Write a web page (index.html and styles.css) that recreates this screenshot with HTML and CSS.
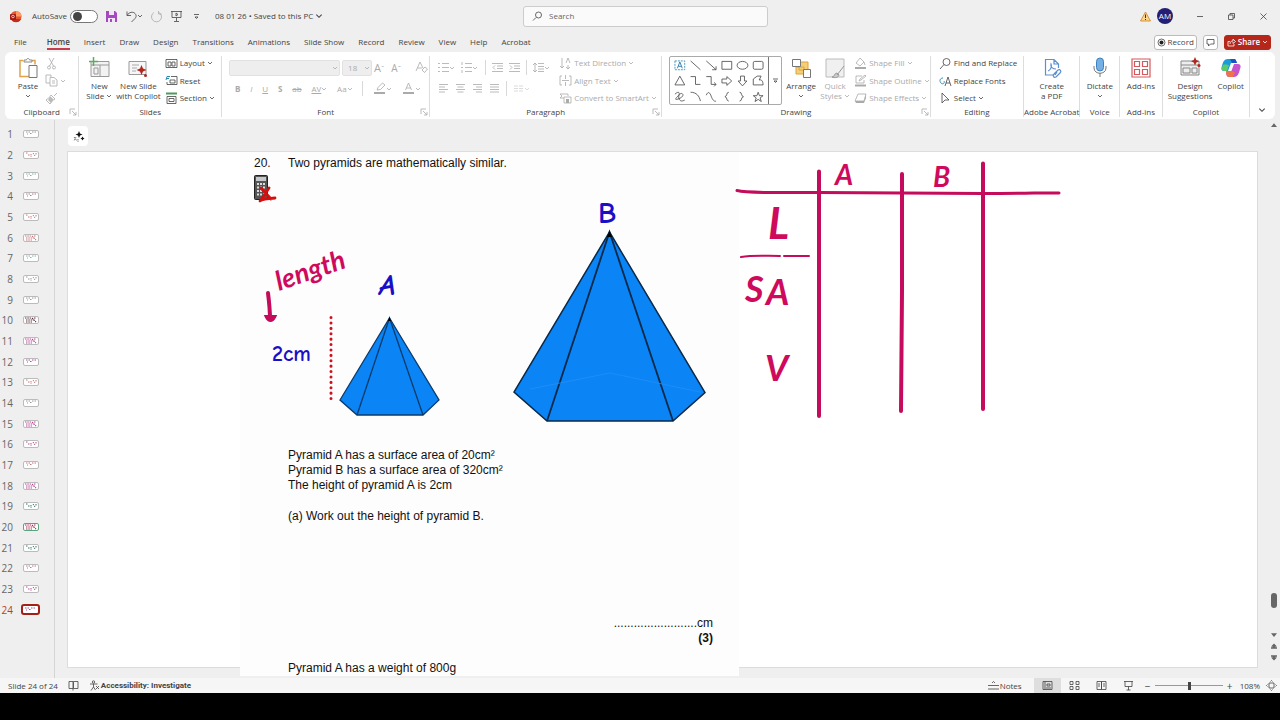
FILE: index.html
```html
<!DOCTYPE html>
<html lang="en">
<head>
<meta charset="utf-8">
<title>08 01 26 - PowerPoint</title>
<link rel="stylesheet" href="styles.css">
</head>
<body>
<svg class="defs" aria-hidden="true">
  <symbol id="chev" viewBox="0 0 6 6"><path d="M1 2l2 2 2-2" fill="none" stroke="currentColor" stroke-width=".8"/></symbol>
  <symbol id="launch" viewBox="0 0 8 8"><path d="M1 6V1h5M3 3l4 4M7 4v3H4" fill="none" stroke="currentColor" stroke-width=".8"/></symbol>
  <symbol id="d1" viewBox="0 0 15 8"><path d="M2 2h4M8 2h4M3 4h1M6 3.500h2" stroke="currentColor" stroke-dasharray="1.500 1" fill="none"/></symbol>
  <symbol id="d2" viewBox="0 0 15 8"><path d="M2 2h2M4 4h2M7 3v3M9 2l2 3M12 2v2" stroke="currentColor" stroke-dasharray="1.500 .8" fill="none"/></symbol>
  <symbol id="d3" viewBox="0 0 15 8"><path d="M1 2h6M2 4h8M2 6h6M8 2l4 4M10 2h2" stroke="currentColor" stroke-width="1.200" stroke-dasharray="1.500 .8" fill="none"/></symbol>
</svg>

<header class="titlebar">
  <div class="quick">
    <svg class="i13" viewBox="0 0 13 13"><circle cx="7" cy="6.500" r="5.500" fill="#e8552e"/><path d="M7 1a5.500 5.500 0 0 1 5.500 5.500H7z" fill="#ff9a62"/><path d="M2 9a5.500 5.500 0 0 0 10 0z" fill="#c12c20"/><rect x="1" y="4" width="6" height="6" rx="1" fill="#a31912"/><circle cx="4" cy="6.500" r="1.300" fill="none" stroke="#fff" stroke-width=".7"/></svg>
    <label class="autosave">AutoSave <input type="checkbox" class="toggle"></label>
    <button aria-label="Save"><svg class="i13" viewBox="0 0 13 13"><path d="M1 1h9l2 2v9H1z" fill="#a648c0"/><path d="M4 1h5v4H4zM3 8h7v4H3z" fill="#f3e5f7"/><path d="M5 9h2v3H5z" fill="#a648c0"/></svg></button>
    <button aria-label="Undo"><svg class="i13" viewBox="0 0 13 13"><path d="M2 1.500v4h4M2.200 5.300C4 2 8 1.300 10 3.500s1 4-.5 5.500L6.500 12" class="ln"/></svg><svg class="ch"><use href="#chev"/></svg></button>
    <button aria-label="Redo" class="off"><svg class="i13" viewBox="0 0 13 13"><path d="M4 2.500A5 5 0 1 0 9 2.500M8.500 1v3h3" class="ln"/></svg></button>
    <button aria-label="Start slide show"><svg class="i13" viewBox="0 0 13 13"><path d="M1 1.500h11M2 1.500v6h9v-6M6.500 8v3M4 11.500h5M6 3l2 1.500L6 6z" class="ln"/></svg></button>
    <button aria-label="Customize"><svg class="i13" viewBox="0 0 13 13"><path d="M4 4.500h5M5 7l1.500 1.500L8 7z" class="ln"/></svg></button>
    <button class="doc">08 01 26 • Saved to this PC <svg class="ch8"><use href="#chev"/></svg></button>
  </div>
  <label class="search"><svg class="i13" viewBox="0 0 13 13"><circle cx="7.500" cy="5" r="3" class="ln"/><path d="M5 7.500L2 10.500" class="ln"/></svg><input type="search" placeholder="Search" aria-label="Search"></label>
  <div class="win">
    <svg class="i11" viewBox="0 0 11 11"><path d="M5.500 1l5 9H.5z" fill="#fbd58a" stroke="#c98229" stroke-width=".8"/><path d="M5.500 3.500v3.500M5.500 8v1" stroke="#333"/></svg>
    <button class="avatar">AM</button>
    <button aria-label="Minimize"><svg class="i11" viewBox="0 0 11 11"><path d="M3 5.500h6" class="ln"/></svg></button>
    <button aria-label="Restore"><svg class="i11" viewBox="0 0 11 11"><path d="M2.500 4h4.500v4.500H2.500zM4 4V2.500h4.500v4.500H7" class="ln"/></svg></button>
    <button aria-label="Close"><svg class="i11" viewBox="0 0 11 11"><path d="M2.500 2.500l6 6M8.500 2.500l-6 6" class="ln"/></svg></button>
  </div>
</header>

<nav class="tabs">
  <a href="#">File</a><a href="#" class="on">Home</a><a href="#">Insert</a><a href="#">Draw</a><a href="#">Design</a><a href="#">Transitions</a><a href="#">Animations</a><a href="#">Slide Show</a><a href="#">Record</a><a href="#">Review</a><a href="#">View</a><a href="#">Help</a><a href="#">Acrobat</a>
  <div class="tabtools">
    <button class="box"><svg class="i9" viewBox="0 0 9 9"><circle cx="4.500" cy="4.500" r="3.500" class="ln"/><circle cx="4.500" cy="4.500" r="2" fill="#222"/></svg>Record</button>
    <button class="box" aria-label="Comments"><svg class="i9" viewBox="0 0 9 9"><path d="M1 1.500h7v4.500H4.500L2.500 8V6H1z" class="ln"/></svg></button>
    <button class="box share"><svg class="i9" viewBox="0 0 9 9"><path d="M3 3.500H1v4.500h6V6M3 6c0-2 1-3 3-3V1l2.500 2.500L6 5.500V4" class="ln"/></svg>Share<svg class="ch"><use href="#chev"/></svg></button>
  </div>
</nav>

<div class="ribbon-wrap">
<section class="ribbon" aria-label="Home ribbon">
  <div class="group g-clip">
    <div class="body">
      <button class="big"><svg class="i22" viewBox="0 0 22 22"><path d="M6 3.500H3v16h9M15 3.500h3v4" fill="none" stroke="#e0a24a" stroke-width="1.500"/><path d="M7 5V3h2.500c0-2 3-2 3 0H15v2z" fill="#fff" stroke="#888"/><path d="M12 8.500h8v12h-8z" fill="#fff" stroke="#777"/></svg>Paste<svg class="ch"><use href="#chev"/></svg></button>
      <div class="rows off">
        <button aria-label="Cut"><svg class="i13" viewBox="0 0 13 13"><path d="M4 1l4.500 8M9 1L4.500 9" class="ln"/><circle cx="4" cy="10.500" r="1.500" class="ln"/><circle cx="9" cy="10.500" r="1.500" class="ln"/></svg></button>
        <button aria-label="Copy"><svg class="i13" viewBox="0 0 13 13"><path d="M5 9H1V1h5v2M5 3.500h4L12 6v6H5zM7 7h3M7 9h3" class="ln"/></svg><svg class="ch"><use href="#chev"/></svg></button>
        <button aria-label="Format painter"><svg class="i13" viewBox="0 0 13 13"><path d="M12 1L9 4M6 3l4 4-1.500 1L5 4.500zM5 5L1 8l4 4 3-4z" class="ln"/><path d="M3 8l3 3 2-3-3-3z" fill="#bbb"/></svg></button>
      </div>
    </div>
    <h2>Clipboard</h2><svg class="launch"><use href="#launch"/></svg>
  </div>
  <div class="group g-slides">
    <div class="body">
      <button class="big"><svg class="i22" viewBox="0 0 22 22"><path d="M3 4.500h18v15H3zM3 8h18M12 8v11M6 11h4v6H6z" fill="#f3f3f3" stroke="#999"/><path d="M5.500 0v9M1 4.500h9" stroke="#5cab62" stroke-width="1.500"/></svg>New<span>Slide <svg class="ch"><use href="#chev"/></svg></span></button>
      <button class="big"><svg class="i22" viewBox="0 0 22 22"><path d="M2 4.500h17v13H2z" fill="#f7f7f7" stroke="#999"/><path d="M5 8h7M5 11h5M5 14h4" stroke="#aaa"/><path d="M14.500 8l1.500 3.500L19.500 13 16 14.500 14.500 18 13 14.500 9.500 13 13 11.500z" fill="#b3261e"/><circle cx="18.500" cy="18.500" r="1.500" fill="#b3261e"/></svg>New Slide<span>with Copilot</span></button>
      <div class="rows">
        <button><svg class="i13" viewBox="0 0 13 13"><path d="M1 2.500h11v8H1zM3 5h3v4H3zM7 5h3v4H7z" class="ln"/></svg>Layout <svg class="ch"><use href="#chev"/></svg></button>
        <button><svg class="i13" viewBox="0 0 13 13"><path d="M6 2.500h6v8H2V8M5 6h5v3H5z" class="ln"/><path d="M1 6l1-3.500h3M1 4.500h3" stroke="#2a8bb0" fill="none"/></svg>Reset</button>
        <button><svg class="i13" viewBox="0 0 13 13"><path d="M1 1.500h11" stroke="#4c9a5a" stroke-width="2"/><path d="M2 4.500h9v7H2zM4 6.500h5v3H4z" class="ln"/></svg>Section <svg class="ch"><use href="#chev"/></svg></button>
      </div>
    </div>
    <h2>Slides</h2>
  </div>
  <div class="group g-font">
    <div class="body col off">
      <div class="tools">
        <span class="sel"><select class="fname" aria-label="Font"><option></option></select><svg class="ch"><use href="#chev"/></svg></span>
        <span class="sel"><select class="fsize" aria-label="Font size"><option>18</option></select><svg class="ch"><use href="#chev"/></svg></span>
        <button class="t11">A<sup>ˆ</sup></button><button class="t10">A<sup>ˇ</sup></button><i class="sep"></i>
        <button aria-label="Clear formatting"><svg class="i13" viewBox="0 0 13 13"><path d="M1 10l4-9 3 6M2.500 7H7M7 9l3-3 2.500 2-3 3.500z" class="ln"/></svg></button>
      </div>
      <div class="tools spread">
        <button><b>B</b></button><button><i>I</i></button><button><u>U</u></button><button><b>S</b></button><button><s>ab</s></button><button><span class="av">AV</span><svg class="ch"><use href="#chev"/></svg></button><button>Aa <svg class="ch"><use href="#chev"/></svg></button><i class="sep"></i>
        <button aria-label="Highlight"><svg class="i13" viewBox="0 0 13 13"><path d="M4 8l1-2.500L9.500 1 12 3 7.500 7.500z" class="ln"/><path d="M1 11h11" stroke="#aaa" stroke-width="2"/></svg><svg class="ch"><use href="#chev"/></svg></button>
        <button aria-label="Font colour"><svg class="i13" viewBox="0 0 13 13"><path d="M3.500 8L6.500 1l3 7M4.500 6h4" class="ln"/><path d="M1 11h11" stroke="#aaa" stroke-width="2"/></svg><svg class="ch"><use href="#chev"/></svg></button>
      </div>
    </div>
    <h2>Font</h2><svg class="launch"><use href="#launch"/></svg>
  </div>
  <div class="group g-para">
    <div class="body off">
      <div class="col pcol">
        <div class="tools spread">
          <button aria-label="Bullets"><svg class="i11" viewBox="0 0 11 11"><path d="M0 1.500h2M0 5.500h2M0 9.500h2M4 1.500h7M4 5.500h7M4 9.500h7" class="ln"/></svg><svg class="ch"><use href="#chev"/></svg></button>
          <button aria-label="Numbering"><svg class="i11" viewBox="0 0 11 11"><path d="M1 0v3M0 5.500h2M1 8v3M4 1.500h7M4 5.500h7M4 9.500h7" class="ln"/></svg><svg class="ch"><use href="#chev"/></svg></button><i class="sep"></i>
          <button aria-label="Decrease indent"><svg class="i11" viewBox="0 0 11 11"><path d="M0 1.500h11M5 4h6M5 6.500h6M0 9.500h11M3 3.500L1 5.500l2 2" class="ln"/></svg></button>
          <button aria-label="Increase indent"><svg class="i11" viewBox="0 0 11 11"><path d="M0 1.500h11M5 4h6M5 6.500h6M0 9.500h11M1 3.500l2 2-2 2" class="ln"/></svg></button><i class="sep"></i>
          <button aria-label="Line spacing"><svg class="i11" viewBox="0 0 11 11"><path d="M2 1v9M0 3l2-2 2 2M0 8l2 2 2-2M5 1.500h6M5 4.500h6M5 7h6M5 9.500h6" class="ln"/></svg><svg class="ch"><use href="#chev"/></svg></button>
        </div>
        <div class="tools al">
          <button aria-label="Align left"><svg class="i11" viewBox="0 0 11 11"><path d="M1 1.500h9M1 4h6M1 6.500h9M1 9h6" class="ln"/></svg></button>
          <button aria-label="Centre"><svg class="i11" viewBox="0 0 11 11"><path d="M1 1.500h9M2.500 4h6M1 6.500h9M2.500 9h6" class="ln"/></svg></button>
          <button aria-label="Align right"><svg class="i11" viewBox="0 0 11 11"><path d="M1 1.500h9M4 4h6M1 6.500h9M4 9h6" class="ln"/></svg></button>
          <button aria-label="Justify"><svg class="i11" viewBox="0 0 11 11"><path d="M1 1.500h9M1 4h9M1 6.500h9M1 9h9" class="ln"/></svg></button><i class="sep"></i>
          <button aria-label="Columns" class="faint"><svg class="i11" viewBox="0 0 11 11"><path d="M1 3h4M6 3h4M1 5.500h4M6 5.500h4M1 8h4M6 8h4" class="ln"/></svg><svg class="ch"><use href="#chev"/></svg></button>
        </div>
      </div>
      <div class="rows">
        <button><svg class="i13" viewBox="0 0 13 13"><path d="M3 1v10M1 9l2 2 2-2M7 6l2-5 2 5M9 8v4M7 10l2 2 2-2" class="ln"/></svg>Text Direction <svg class="ch"><use href="#chev"/></svg></button>
        <button><svg class="i13" viewBox="0 0 13 13"><path d="M3 2H1v9h2M10 2h2v9h-2M3 6.500h7M6.500 1v4M6.500 8v4" class="ln"/></svg>Align Text <svg class="ch"><use href="#chev"/></svg></button>
        <button><svg class="i13" viewBox="0 0 13 13"><path d="M1 2h8v2M1 2l2 2-2 2h4M5 5h7v6H5z" class="ln"/><path d="M7 7h3v4H7z" fill="#aaa"/></svg>Convert to SmartArt <svg class="ch"><use href="#chev"/></svg></button>
      </div>
    </div>
    <h2>Paragraph</h2><svg class="launch"><use href="#launch"/></svg>
  </div>
  <div class="group g-draw">
    <div class="body">
      <div class="gallery">
        <svg viewBox="0 0 98 48"><g fill="none" stroke="#555" stroke-width=".9">
          <path d="M4 4h10v9H4z" stroke="#3a8fb7" stroke-dasharray="2 1"/><path d="M6.500 11.500L9 5l2.500 6.500M7.500 9.500h3" stroke="#2273a8"/>
          <path d="M20 4l10 9M36 4l10 9M46 9.500V13h-4M52 4.500h10v8H52z"/><rect x="84" y="4.500" width="10" height="8" rx="1.500"/><ellipse cx="73" cy="8.500" rx="5.500" ry="4"/>
          <path d="M9 19.500l5 9H4zM20 20h5v8h5M36 20h5v8h5M44 26l2 2-2 2M52 22.500h5V20l5 4.500-5 4.500v-2.500h-5zM71 19.500h4v5h2.500L73 29.500l-4.500-5H71zM84 28.500v-6l4-3h4l-2 4c3-1 4 2 4 5z"/>
          <path d="M4 38c4-4 6-1 3 2s-3 4 0 3 6-3 5-5-5 0-4 4 4 3 6 2M20 36c6 0 9 4 10 9M36 39c2-5 4-2 5 1s3 6 5 5M59 36c-3 0-1 4-4 4.500 3 .5 1 4.500 4 4.500M70 36c3 0 1 4 4 4.500-3 .5-1 4.500-4 4.500M89 36l1.300 3.500H94l-3 2.300 1.200 3.700-3.200-2.200-3.200 2.200 1.200-3.700-3-2.300h3.700z"/></g></svg>
        <button aria-label="More shapes"><svg class="i13" viewBox="0 0 13 13"><path d="M4 5h5M5 7l1.500 1.500L8 7z" class="ln"/></svg></button>
      </div>
      <button class="big"><svg class="i22" viewBox="0 0 22 22"><path d="M9 5h9v8H9zM6 10h8v7H6z" fill="#f6cf74" stroke="#d9a441"/><path d="M2.500 2.500h8v7h-8zM13.500 12.500h7v8h-7z" fill="#fff" stroke="#777"/></svg>Arrange<svg class="ch"><use href="#chev"/></svg></button>
      <button class="big off"><svg class="i22" viewBox="0 0 22 22"><path d="M2 2h18v18H2z" fill="#f0f0f0" stroke="#bbb"/><path d="M20 9l-7 9M13 16c-3 0-2 4-5 4 3 1 6 1 7-2z" fill="#ccc" stroke="#999"/></svg>Quick<span>Styles <svg class="ch"><use href="#chev"/></svg></span></button>
      <div class="rows off">
        <button><svg class="i13" viewBox="0 0 13 13"><path d="M6 1L2 6l4 3 4-4zM10 5l1 3" class="ln"/><path d="M1 11h11" stroke="#aaa" stroke-width="2"/></svg>Shape Fill <svg class="ch"><use href="#chev"/></svg></button>
        <button><svg class="i13" viewBox="0 0 13 13"><path d="M8 2H2v7h8V6M5 7l1-2 5-4 1 1-5 4z" class="ln"/><path d="M1 11.500h11" stroke="#aaa" stroke-width="2"/></svg>Shape Outline <svg class="ch"><use href="#chev"/></svg></button>
        <button><svg class="i13" viewBox="0 0 13 13"><path d="M4 2h8l-2 7H1z" class="ln"/><path d="M1 9h9l2-7v4l-2 5H2z" fill="#aaa"/></svg>Shape Effects <svg class="ch"><use href="#chev"/></svg></button>
      </div>
    </div>
    <h2>Drawing</h2><svg class="launch"><use href="#launch"/></svg>
  </div>
  <div class="group g-edit">
    <div class="body">
      <div class="rows">
        <button><svg class="i13" viewBox="0 0 13 13"><circle cx="7.500" cy="5" r="3.500" class="ln"/><path d="M5 7.500L1 12" class="ln"/></svg>Find and Replace</button>
        <button><svg class="i13" viewBox="0 0 13 13"><path d="M6 12l3-9 3 9M7 9h4" class="ln"/><path d="M4 4C1 4 0 7 2 9s4 0 3-2" stroke="#3a8fb7" fill="none"/></svg>Replace Fonts</button>
        <button><svg class="i13" viewBox="0 0 13 13"><path d="M3 1v10l3-3h4z" class="ln"/></svg>Select <svg class="ch"><use href="#chev"/></svg></button>
      </div>
    </div>
    <h2>Editing</h2>
  </div>
  <div class="group g-pdf">
    <div class="body"><button class="big"><svg class="i22" viewBox="0 0 22 22"><g fill="none" stroke="#5a8fd0" stroke-width="1.200"><path d="M12 18H4.500V2.500H13L17.500 7v4M13 2.500V7h4M7 14c3-1 4-5 3-7-1 3 2 5 5 5"/><path d="M13 17l4-4c2-1 4 1 2 3l-4 4c-2 1-4-1-2-3zM16 15l-2 3"/></g></svg>Create<span>a PDF</span></button></div>
    <h2>Adobe Acrobat</h2>
  </div>
  <div class="group g-voice">
    <div class="body"><button class="big"><svg class="i22" viewBox="0 0 22 22"><rect x="7.500" y="1" width="7" height="13" rx="3.500" fill="#74b0e4" stroke="#3f7fbd"/><path d="M5 9v2c0 7 12 7 12 0V9M11 16v4" fill="none" stroke="#777"/></svg>Dictate<svg class="ch"><use href="#chev"/></svg></button></div>
    <h2>Voice</h2>
  </div>
  <div class="group g-add">
    <div class="body"><button class="big"><svg class="i22" viewBox="0 0 22 22"><path d="M2 2h18v18H2zM4.500 4.500h5v5h-5zM12.500 4.500h5v5h-5zM4.500 12.500h5v5h-5zM12.500 12.500h5v5h-5z" fill="none" stroke="#d4595c" stroke-width="1.200"/></svg>Add-ins</button></div>
    <h2>Add-ins</h2>
  </div>
  <div class="group g-cop">
    <div class="body">
      <button class="big"><svg class="i22" viewBox="0 0 22 22"><path d="M2 4h18v14H2zM2 8h18M4 11h7v5H4zM13 11h5v5h-5z" fill="#eee" stroke="#888"/><path d="M16 0l1.300 3L20 4.300 17.300 5.600 16 8.500l-1.300-2.900L12 4.300 14.700 3z" fill="#b3261e"/><circle cx="20" cy="8.500" r="1.500" fill="#b3261e"/></svg>Design<span>Suggestions</span></button>
      <button class="big"><svg class="i22" viewBox="0 0 22 22"><path d="M8 2h6c2 0 2 2 3 4H11L8 14H4c-3 0-3-3-2-5 1-4 2-7 6-7z" fill="#1b9bd8"/><path d="M3 8c2-1 5 0 6 0l-2 6H4c-3 0-2-4-1-6z" fill="#5fc96a"/><path d="M14 2c2 0 2 2 3 4h-5l-2-4z" fill="#1856c4"/><path d="M14 7h4c3 0 3 3 2 5-1 4-2 8-6 8H9c-2 0-3-2-3-5h5z" fill="#c455cf"/><path d="M6 14h5l4 1-2 5H9c-2 0-3-3-3-6z" fill="#f0724b"/></svg>Copilot</button>
    </div>
    <h2>Copilot</h2>
  </div>
  <button class="collapse" aria-label="Collapse ribbon"><svg class="ch8"><use href="#chev"/></svg></button>
</section>
</div>

<main class="work">
  <ol class="thumbs">
    <li>1<button><svg><use href="#d1"/></svg></button></li>
    <li>2<button class="red"><svg><use href="#d2"/></svg></button></li>
    <li>3<button class="teal"><svg><use href="#d1"/></svg></button></li>
    <li>4<button class="red"><svg><use href="#d1"/></svg></button></li>
    <li>5<button class="red"><svg><use href="#d2"/></svg></button></li>
    <li>6<button class="red"><svg><use href="#d3"/></svg></button></li>
    <li>7<button class="teal"><svg><use href="#d1"/></svg></button></li>
    <li>8<button><svg><use href="#d2"/></svg></button></li>
    <li>9<button><svg><use href="#d1"/></svg></button></li>
    <li>10<button class="dark"><svg><use href="#d3"/></svg></button></li>
    <li>11<button class="pink"><svg><use href="#d3"/></svg></button></li>
    <li>12<button class="pink"><svg><use href="#d1"/></svg></button></li>
    <li>13<button class="red"><svg><use href="#d2"/></svg></button></li>
    <li>14<button><svg><use href="#d1"/></svg></button></li>
    <li>15<button class="pink"><svg><use href="#d3"/></svg></button></li>
    <li>16<button class="pink"><svg><use href="#d2"/></svg></button></li>
    <li>17<button class="red"><svg><use href="#d1"/></svg></button></li>
    <li>18<button class="pink"><svg><use href="#d3"/></svg></button></li>
    <li>19<button class="green"><svg><use href="#d2"/></svg></button></li>
    <li>20<button class="mix"><svg><use href="#d3"/></svg></button></li>
    <li>21<button class="green"><svg><use href="#d2"/></svg></button></li>
    <li>22<button class="red"><svg><use href="#d1"/></svg></button></li>
    <li>23<button class="pink"><svg><use href="#d2"/></svg></button></li>
    <li class="cur">24<button class="pink"><svg><use href="#d1"/></svg></button></li>
  </ol>
  <section class="stage">
    <button class="spark" aria-label="Designer"><svg class="i13" viewBox="0 0 13 13"><path d="M7 1l1 2.500L10.500 4.500 8 5.500 7 8 6 5.500 3.500 4.500 6 3.500zM10.500 6.500l.7 1.300 1.300.7-1.300.7-.7 1.300-.7-1.300-1.300-.7 1.300-.7z" fill="#111"/><path d="M2 7l3 4M4 7l-2 4M6 9v3" stroke="#777" stroke-dasharray="1.500 .7"/></svg></button>
    <article class="slide">
      <div class="sheet">
        <div class="q"><span>20.</span><p>Two pyramids are mathematically similar.</p></div>
        <svg class="figure" viewBox="240 171 499 276">
          <rect x="254.500" y="175.500" width="13" height="24" rx="1" fill="#555" stroke="#222"/><rect x="256" y="177" width="10" height="4" fill="#c5c9cc"/><path d="M257 184h9M257 187.500h9M257 191h9M257 194.500h9" stroke="#ddd" stroke-width="2" stroke-dasharray="2 1"/><path d="M261 188l10 11M269 188l-8 12M260 201c4-3 9-2 15-3" fill="none" stroke="#d31010" stroke-width="2.800" stroke-linecap="round"/>
          <path d="M389.500 318L439 400l-16 15h-66l-17-15z" fill="#0b84f5" stroke="#0b3a6b" stroke-width="1.300"/><path d="M357 415l32.500-97L423 415" fill="none" stroke="#0b3a6b" stroke-width="1.300"/><path d="M388 321l1.500-4 1.500 4z"/>
          <path d="M609.500 232L705 392.500 673 421H547l-33-29z" fill="#0b84f5" stroke="#0a2948" stroke-width="1.500"/><path d="M547 421l62.500-189L673 421" fill="none" stroke="#0a2948" stroke-width="1.800"/><path d="M607 237l2.500-6 2.500 6z"/><path d="M530 389l80-16 90 19" fill="none" stroke="#228ff6" stroke-width=".8"/>
          <path d="M331 317.500v82" stroke="#d0101c" stroke-width="3" stroke-linecap="round" stroke-dasharray=".1 5.300"/>
          <text class="blue big-l it" x="379" y="295">A</text><text class="blue big-l" x="598" y="223">B</text><text class="blue dim" x="272" y="361">2cm</text>
        </svg>
        <div class="txt">
          <p>Pyramid A has a surface area of 20cm²<br>Pyramid B has a surface area of 320cm²<br>The height of pyramid A is 2cm</p>
          <p>(a) Work out the height of pyramid B.</p>
          <p class="ans">.........................cm<br><b>(3)</b></p>
          <p class="last">Pyramid A has a weight of 800g</p>
        </div>
      </div>
      <svg class="ink" viewBox="68 152 1189 515" preserveAspectRatio="xMinYMin meet">
        <g class="pen"><path d="M819 171.500V416M902 174V290L901 411M983 163.500V409"/><path d="M737 190.500c12 3 40 2 82 2s120 1 164 1 66-1 76-.5" stroke-width="3"/><path d="M741 257c12-2 24-1 39-1M784 256h25" stroke-width="2"/><path d="M268 293c1 8 2 18 2 26M267 317c2 4 5 4 7 0z"/></g>
        <text x="835" y="185" class="s28">A</text><text x="933" y="187" class="s28">B</text>
        <text x="768" y="239" class="s40">L</text><text x="745" y="302" class="s36">S</text><text x="766" y="305" class="s36">A</text><text x="765" y="381" class="s36">V</text>
        <text class="len" transform="translate(279 291) rotate(-19)">length</text>
      </svg>
    </article>
    <div class="scroll"><svg viewBox="0 0 8 6"><path d="M0 5l4-5 4 5z"/></svg><i></i><svg viewBox="0 0 8 6"><path d="M0 0l4 5 4-5z"/></svg><svg viewBox="0 0 8 8"><path d="M0 4l4-4 4 4H6v1h2v2H0V5h2V4z"/></svg><svg viewBox="0 0 8 8"><path d="M0 4l4 4 4-4H6V3h2V1H0v2h2v1z"/></svg></div>
  </section>
</main>

<footer class="status">
  <span>Slide 24 of 24</span>
  <button aria-label="Spelling"><svg class="i11" viewBox="0 0 11 11"><path d="M1 1.500h4v7H1zM5.500 1.500H10v7H5.500zM5 8.500v2" class="ln"/></svg></button>
  <button class="acc"><svg class="i11" viewBox="0 0 11 11"><circle cx="4.500" cy="2" r="1.200" class="ln"/><path d="M1 4h7.500M4.500 4v3L2 10.500M4.500 7l2 3M7 6l3 3M10 6L7 9" class="ln"/></svg>Accessibility: Investigate</button>
  <div class="views">
    <button class="notes"><svg class="i11" viewBox="0 0 11 11"><path d="M4 3l1.500-1.500L7 3M0 5.500h11M0 9h11" class="ln"/></svg>Notes</button>
    <button class="vw on" aria-label="Normal"><svg class="i11" viewBox="0 0 11 11"><path d="M1 1.500h9v8H1zM3 1.500v8M5 4h3v2H5zM4 8h5" class="ln"/></svg></button>
    <button class="vw" aria-label="Slide sorter"><svg class="i11" viewBox="0 0 11 11"><path d="M1 1.500h3v3H1zM7 1.500h3v3H7zM1 6.500h3v3H1zM7 6.500h3v3H7z" class="ln"/></svg></button>
    <button class="vw" aria-label="Reading view"><svg class="i11" viewBox="0 0 11 11"><path d="M1 1.500h4.500v8H1zM5.500 1.500H10v8H5.500zM2 4h2M7 4h2M2 6h2M7 6h2" class="ln"/></svg></button>
    <button class="vw" aria-label="Slide show"><svg class="i11" viewBox="0 0 11 11"><path d="M1 1.500h9M2 1.500v5h7v-5M5.500 6.500V10M3.500 10h4" class="ln"/></svg></button>
    <button aria-label="Zoom out" class="pm">−</button>
    <input type="range" min="0" max="100" value="51" aria-label="Zoom">
    <button aria-label="Zoom in" class="pm">+</button>
    <button class="pct">108%</button>
    <button aria-label="Fit"><svg class="i11" viewBox="0 0 11 11"><path d="M3 3h5v5H3zM4.500 1.500l1-1 1 1M4.500 9.500l1 1 1-1M1.500 4.500l-1 1 1 1M9.500 4.500l1 1-1 1" class="ln"/></svg></button>
  </div>
</footer>
</body>
</html>
```
FILE: styles.css
```css
* { box-sizing: border-box; }
body {
  margin: 0;
  min-height: 100vh;
  padding-bottom: 27px;
  background: #000;
  display: flex;
  flex-direction: column;
  font: 8px/10px "Open Sans", "Noto Sans", sans-serif;
  color: #444;
}
h2, p, ol { margin: 0; padding: 0; font: inherit; }
button, input, select {
  font: inherit;
  color: inherit;
  background: none;
  border: 0;
  padding: 0;
  margin: 0;
}
button { display: inline-flex; align-items: center; justify-content: center; white-space: nowrap; }
a { color: inherit; text-decoration: none; }
svg { flex: none; }
.defs { position: absolute; width: 0; height: 0; }
.ln { fill: none; stroke: currentColor; stroke-opacity: .8; }
.i9 { width: 9px; height: 9px; }
.i11 { width: 11px; height: 11px; }
.i13 { width: 13px; height: 13px; }
.i22 { width: 22px; height: 22px; }
.ch { width: 6px; height: 6px; }
.ch8 { width: 8px; height: 8px; }
.off { color: #aaa; }
.faint { opacity: .5; }

/* title bar */
.titlebar {
  display: grid;
  grid-template-columns: 523fr 245fr 512fr;
  align-items: center;
  height: 32px;
  background: #efefef;
}
.quick { display: flex; align-items: center; gap: 7px; padding-left: 9px; }
.quick > svg { margin-right: 3px; }
.autosave { display: flex; align-items: center; gap: 3px; }
.quick button .ch { margin-left: -1px; }
.doc { gap: 2px; margin-left: 5px; }
.toggle {
  appearance: none;
  width: 28px;
  height: 13px;
  border: 1px solid #777;
  border-radius: 7px;
  background: #fff;
}
.toggle::before {
  content: "";
  display: block;
  width: 9px;
  height: 9px;
  margin: 1px 2px;
  border-radius: 50%;
  background: #444;
}
.search {
  display: flex;
  align-items: center;
  gap: 5px;
  height: 21px;
  padding: 0 7px;
  border: 1px solid #ccc;
  border-radius: 3px;
  background: #fafafa;
}
.search input { flex: 1; min-width: 0; outline: 0; }
.search input::placeholder { color: #666; }
.win { display: flex; justify-content: flex-end; align-items: center; gap: 21px; padding-right: 11px; }
.win > svg { margin-right: -15px; }
.avatar { width: 16px; height: 16px; border-radius: 50%; background: #241f73; color: #fff; }

/* tabs */
.tabs {
  display: flex;
  align-items: center;
  gap: 14px;
  height: 20px;
  padding: 0 9px 0 14px;
  background: #efefef;
}
.tabs a { line-height: 13px; padding-top: 1px; border-bottom: 2px solid transparent; }
.tabs a:first-child { margin-right: 6px; }
.tabs a.on { font-weight: 600; border-color: #c43e50; }
.tabtools { margin-left: auto; display: flex; gap: 6px; }
.box {
  height: 15px;
  min-width: 15px;
  gap: 2px;
  padding: 0 2px;
  border: 1px solid #bbb;
  border-radius: 3px;
  background: #fff;
}
.share { background: #b5261b; border-color: #b5261b; color: #fff; font-weight: 600; }

/* ribbon */
.ribbon-wrap { background: #efefef; padding: 0 5px; }
.ribbon {
  display: flex;
  height: 67px;
  padding: 4px 0 2px;
  background: #fff;
  border-radius: 6px;
}
.group {
  position: relative;
  display: flex;
  flex-direction: column;
  min-width: 0;
  border-right: 1px solid #ddd;
}
.group h2 { display: flex; justify-content: center; line-height: 11px; white-space: nowrap; }
.launch { position: absolute; right: 1px; bottom: 1px; width: 8px; height: 8px; color: #aaa; }
.body { flex: 1; display: flex; align-items: stretch; min-height: 0; }
.g-clip { flex: 74 1 0; }
.g-slides { flex: 143 1 0; }
.g-font { flex: 209 1 0; }
.g-para { flex: 233 1 0; }
.g-draw { flex: 270 1 0; }
.g-edit { flex: 93 1 0; }
.g-pdf { flex: 56 1 0; }
.g-voice { flex: 39 1 0; }
.g-add { flex: 42 1 0; }
.g-cop { flex: 87 1 0; }
.big { flex-direction: column; justify-content: flex-start; padding-top: 1px; }
.big.off { color: #aaa; }
.big > svg:first-child { margin-bottom: 2px; }
.big > .ch { margin-top: 2px; }
.big span { display: flex; align-items: center; gap: 2px; }
.rows { display: flex; flex-direction: column; justify-content: space-between; padding-bottom: 1px; }
.rows button { justify-content: flex-start; gap: 2px; height: 14px; }
.col { display: flex; flex-direction: column; }
.tools { display: flex; align-items: center; height: 21px; gap: 5px; }
.spread { justify-content: space-between; }
.sep { width: 1px; height: 15px; background: #d8d8d8; }
.g-clip .body { padding-left: 12px; gap: 6px; }
.g-slides .body { padding-left: 7px; gap: 4px; }
.g-font .body { padding: 1px 6px 0 7px; }
.g-font .spread { padding: 0 2px 0 6px; }
.fname { width: 111px; }
.fsize { width: 30px; }
.fname, .fsize { height: 16px; appearance: none; padding: 0 5px; background: #eee; border: 1px solid #e2e2e2; border-radius: 2px; }
.g-font .tools:first-child { gap: 7px; }
.sel { display: flex; align-items: center; margin-right: -5px; }
.sel .ch { margin-left: -8px; margin-right: 2px; pointer-events: none; }
.t11 { font-size: 11px; }
.t10 { font-size: 10px; }
sup { font-size: 8px; line-height: 0; }
.av { text-decoration: underline; }
.g-para .body { padding-left: 8px; gap: 9px; }
.pcol { width: 112px; padding-top: 1px; }
.al { gap: 6px; }
.g-draw .body { padding-left: 7px; gap: 4px; }
.gallery { display: flex; width: 113px; height: 49px; border: 1px solid #aaa; border-radius: 2px; }
.gallery > svg { width: 98px; height: 47px; }
.gallery button { flex: 1; border-left: 1px solid #777; }
.g-draw .big { width: 32px; }
.g-edit .body { padding-left: 8px; }
.g-pdf .body, .g-voice .body, .g-add .body { justify-content: center; }
.g-cop .body { padding: 0 5px; justify-content: space-between; }
.collapse { flex: 0 0 25px; align-items: flex-end; padding-bottom: 3px; }

/* workspace */
.work { flex: 1; display: flex; background: #efefef; padding-top: 1px; }
.thumbs {
  width: 55px;
  flex: none;
  display: flex;
  flex-direction: column;
  padding: 4px 0 58px;
  border-right: 1px solid #d5d5d5;
  list-style: none;
  font-size: 10px;
}
.thumbs li { flex: 1; display: grid; grid-template-columns: 13px 16px; gap: 10px; align-items: center; text-align: right; color: #666; }
.thumbs button { width: 16px; height: 8px; border: 1px solid #bbb; border-radius: 2px; background: #fff; color: #999; overflow: hidden; }
.thumbs svg { width: 15px; height: 8px; }
.thumbs .red { color: #c4767c; }
.thumbs .teal { color: #7fb5ae; }
.thumbs .pink { color: #b34a95; }
.thumbs .green { color: #2f7a52; }
.thumbs .dark { color: #5b3038; }
.thumbs .mix { color: #b02d5c; border-color: #5ba57c; }
.thumbs .cur { color: #c0392b; }
.cur button { width: 19px; height: 11px; margin-left: -2px; border: 2px solid #a32015; border-radius: 3px; }
.stage {
  flex: 1;
  display: grid;
  grid-template-columns: minmax(0, 1fr) 8px;
  grid-template-rows: 32px 1fr;
  column-gap: 13px;
  padding: 0 2px 11px 13px;
}
.spark { align-self: center; width: 20px; height: 20px; border-radius: 4px; background: #fff; }
.slide { grid-row: 2; position: relative; background: #fff; outline: 1px solid #dcdcdc; height: 0; min-height: 100%; }
.sheet { width: 499px; margin-left: 172px; padding-top: 4px; background: #fdfdfd; position: relative; font: 12px/15px "Liberation Sans", Arial, sans-serif; color: #111; }
.q { display: grid; grid-template-columns: 34px 1fr; padding-left: 14px; }
.figure { display: block; width: 100%; }
.txt { padding: 1px 0 0 48px; }
.txt p { margin-bottom: 16px; }
.txt .ans { margin: 92px 26px 15px 0; text-align: right; }
.txt .last { margin: 0; }
.blue { fill: #1a0fc8; font-family: "Comic Sans MS", "Comic Neue", Lato, sans-serif; font-weight: 700; }
.big-l { font-size: 30px; }
.it { font-style: italic; }
.dim { font-size: 22px; }
.ink { position: absolute; inset: 0; width: 1189px; max-width: 100%; height: auto; fill: #cf0a5c; font-family: Lato, sans-serif; font-style: italic; font-weight: 700; }
.pen { fill: none; stroke: #c40b5c; stroke-width: 4; stroke-linecap: round; }
.s28 { font-size: 28px; }
.s36 { font-size: 36px; }
.s40 { font-size: 44px; }
.len { font-size: 27px; }
.scroll { grid-row: 1 / 3; grid-column: 2; display: flex; flex-direction: column; align-items: center; gap: 4px; fill: #666; padding-top: 2px; }
.scroll svg { width: 6px; height: 7px; }
.scroll i { width: 6px; height: 15px; margin-top: auto; margin-bottom: 20px; border-radius: 3px; background: #666; }
.scroll svg:last-child { margin-bottom: 6px; }

/* status bar */
.status { display: flex; align-items: center; gap: 10px; height: 15px; padding: 0 3px 0 8px; background: #f6f6f6; }
.acc { gap: 1px; font-family: Roboto, sans-serif; font-weight: 700; }
.views { margin-left: auto; display: flex; align-items: center; }
.notes { gap: 1px; margin-right: 12px; }
.vw { width: 27px; height: 15px; }
.vw.on { background: #dedede; }
.pm { width: 12px; font-size: 10px; }
.status input { appearance: none; width: 68px; height: 10px; margin: 0 1px; background: linear-gradient(#999, #999) center / 100% 1px no-repeat; }
.status input::-webkit-slider-thumb { appearance: none; width: 3px; height: 8px; background: #444; }
.pct { margin: 0 6px 0 4px; }
```
